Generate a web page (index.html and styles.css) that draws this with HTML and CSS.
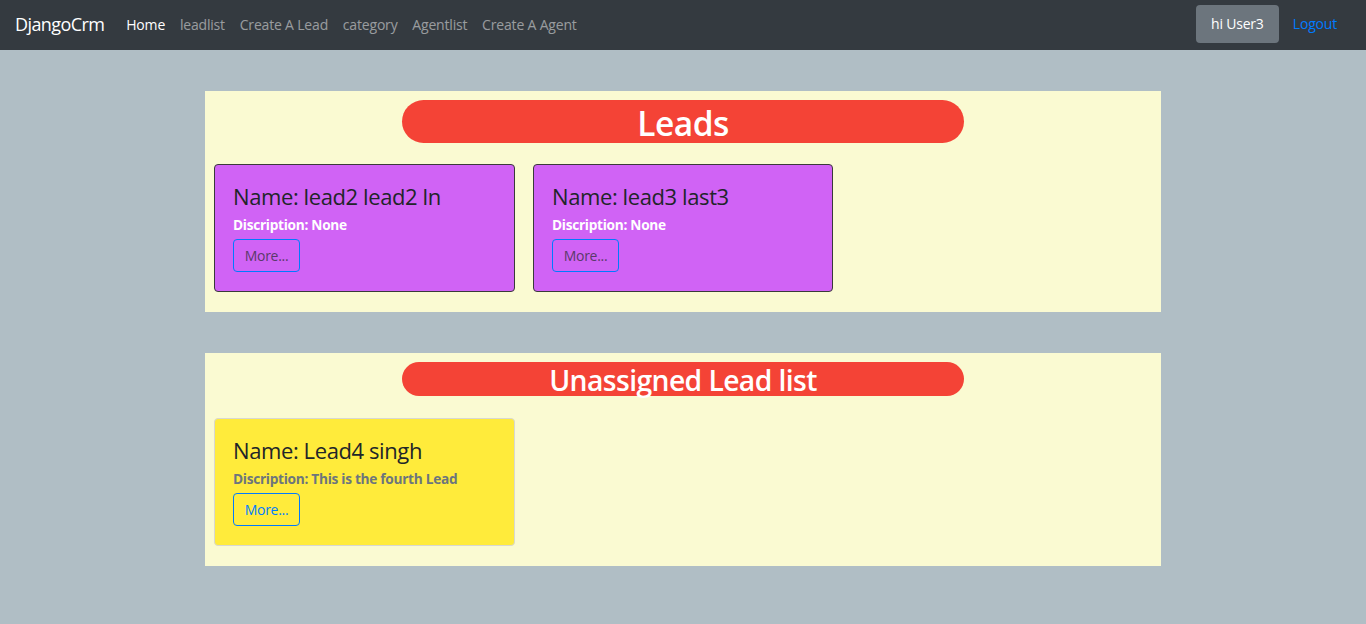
FILE: index.html
```html
<!DOCTYPE html>
<html lang="en">
<head>
<meta charset="utf-8">
<title>DjangoCrm</title>
<link rel="stylesheet" href="styles.css">
</head>
<body>
<nav class="navbar">
  <a class="brand" href="#">DjangoCrm</a>
  <ul class="nav-links">
    <li><a class="nav-link active" href="#">Home</a></li>
    <li><a class="nav-link" href="#">leadlist</a></li>
    <li><a class="nav-link" href="#">Create A Lead</a></li>
    <li><a class="nav-link" href="#">category</a></li>
    <li><a class="nav-link" href="#">Agentlist</a></li>
    <li><a class="nav-link" href="#">Create A Agent</a></li>
  </ul>
  <div class="nav-right">
    <button class="user-btn">hi User3</button>
    <a class="logout" href="#">Logout</a>
  </div>
</nav>

<main class="page">
  <section class="panel">
    <h1 class="pill pill-lg">Leads</h1>
    <div class="cards">
      <div class="card card-purple">
        <h4 class="card-title">Name: lead2 lead2 ln</h4>
        <p class="card-desc">Discription: None</p>
        <a class="btn-more" href="#">More...</a>
      </div>
      <div class="card card-purple">
        <h4 class="card-title">Name: lead3 last3</h4>
        <p class="card-desc">Discription: None</p>
        <a class="btn-more" href="#">More...</a>
      </div>
    </div>
  </section>

  <section class="panel">
    <h2 class="pill pill-md">Unassigned Lead list</h2>
    <div class="cards">
      <div class="card card-yellow">
        <h4 class="card-title">Name: Lead4 singh</h4>
        <p class="card-desc">Discription: This is the fourth Lead</p>
        <a class="btn-more" href="#">More...</a>
      </div>
    </div>
  </section>
</main>
</body>
</html>
```

FILE: styles.css
```css
* { box-sizing: border-box; }

html, body {
  margin: 0;
  padding: 0;
}

body {
  background: #b0bec5;
  font-family: "Open Sans", "Noto Sans", sans-serif;
  color: #212529;
  min-height: 624px;
}

.navbar {
  height: 50px;
  background: #343a40;
  display: flex;
  align-items: center;
  padding: 0 29px 0 15px;
}

.brand {
  color: #fff;
  text-decoration: none;
  font-size: 18px;
  letter-spacing: -0.6px;
  margin-right: 22px;
  margin-top: -3px;
}

.nav-links {
  list-style: none;
  display: flex;
  margin: -3px 0 0;
  padding: 0;
  gap: 14.8px;
}

.nav-link {
  color: rgba(255, 255, 255, 0.5);
  text-decoration: none;
  font-size: 14px;
  letter-spacing: -0.18px;
}

.nav-link.active { color: #fff; }

.nav-right {
  margin-left: auto;
  display: flex;
  align-items: center;
  gap: 14px;
}

.user-btn {
  background: #6c757d;
  color: #fff;
  border: none;
  border-radius: 4px;
  height: 38px;
  width: 83px;
  margin-top: -2px;
  padding-bottom: 3px;
  font-family: inherit;
  font-size: 14px;
  letter-spacing: -0.2px;
}

.logout {
  color: #007bff;
  text-decoration: none;
  font-size: 14px;
  letter-spacing: -0.2px;
  margin-top: -3px;
}

.page {
  display: flex;
  flex-direction: column;
  align-items: center;
  gap: 41px;
  padding-top: 41px;
}

.panel {
  width: 956px;
  background: #fafad2;
  padding: 9px 9px 20px;
  display: flex;
  flex-direction: column;
}

.pill {
  align-self: center;
  width: 562px;
  background: #f44336;
  color: #fff;
  border-radius: 22px;
  margin: 0;
  text-align: center;
  font-weight: 600;
}

.pill-lg {
  height: 43px;
  line-height: 47px;
  font-size: 33.5px;
  letter-spacing: -0.5px;
  margin-bottom: 21px;
}

.pill-md {
  height: 34px;
  line-height: 37px;
  font-size: 28.3px;
  letter-spacing: -0.6px;
  border-radius: 17px;
  margin-bottom: 22px;
}

.cards {
  display: flex;
  gap: 18px;
}

.card {
  width: 301px;
  height: 128px;
  border-radius: 4px;
  padding: 16px 18px 0;
  display: flex;
  flex-direction: column;
  align-items: flex-start;
}

.card-purple {
  background: #d063f5;
  border: 1px solid #3a3a3a;
}

.card-purple + .card-purple { width: 300px; }

.card-yellow {
  background: #ffeb3b;
  border: 1px solid #d8d8d0;
}

.card-title {
  margin: 0;
  font-size: 22px;
  font-weight: 400;
  line-height: 30px;
  letter-spacing: -0.4px;
  color: #212529;
}

.card-desc {
  margin: 5px 0 0;
  font-size: 13.7px;
  font-weight: 700;
  line-height: 18px;
  letter-spacing: -0.3px;
}

.card-purple .card-desc { color: #fff; }
.card-yellow .card-desc { color: #6c757d; }

.btn-more {
  margin-top: 5px;
  height: 33px;
  width: 67px;
  display: flex;
  align-items: center;
  justify-content: center;
  border: 1px solid #007bff;
  border-radius: 4px;
  text-decoration: none;
  font-size: 14px;
  letter-spacing: -0.3px;
}

.card-purple .btn-more { color: #5a3a6a; }
.card-yellow .btn-more { color: #007bff; }
```
